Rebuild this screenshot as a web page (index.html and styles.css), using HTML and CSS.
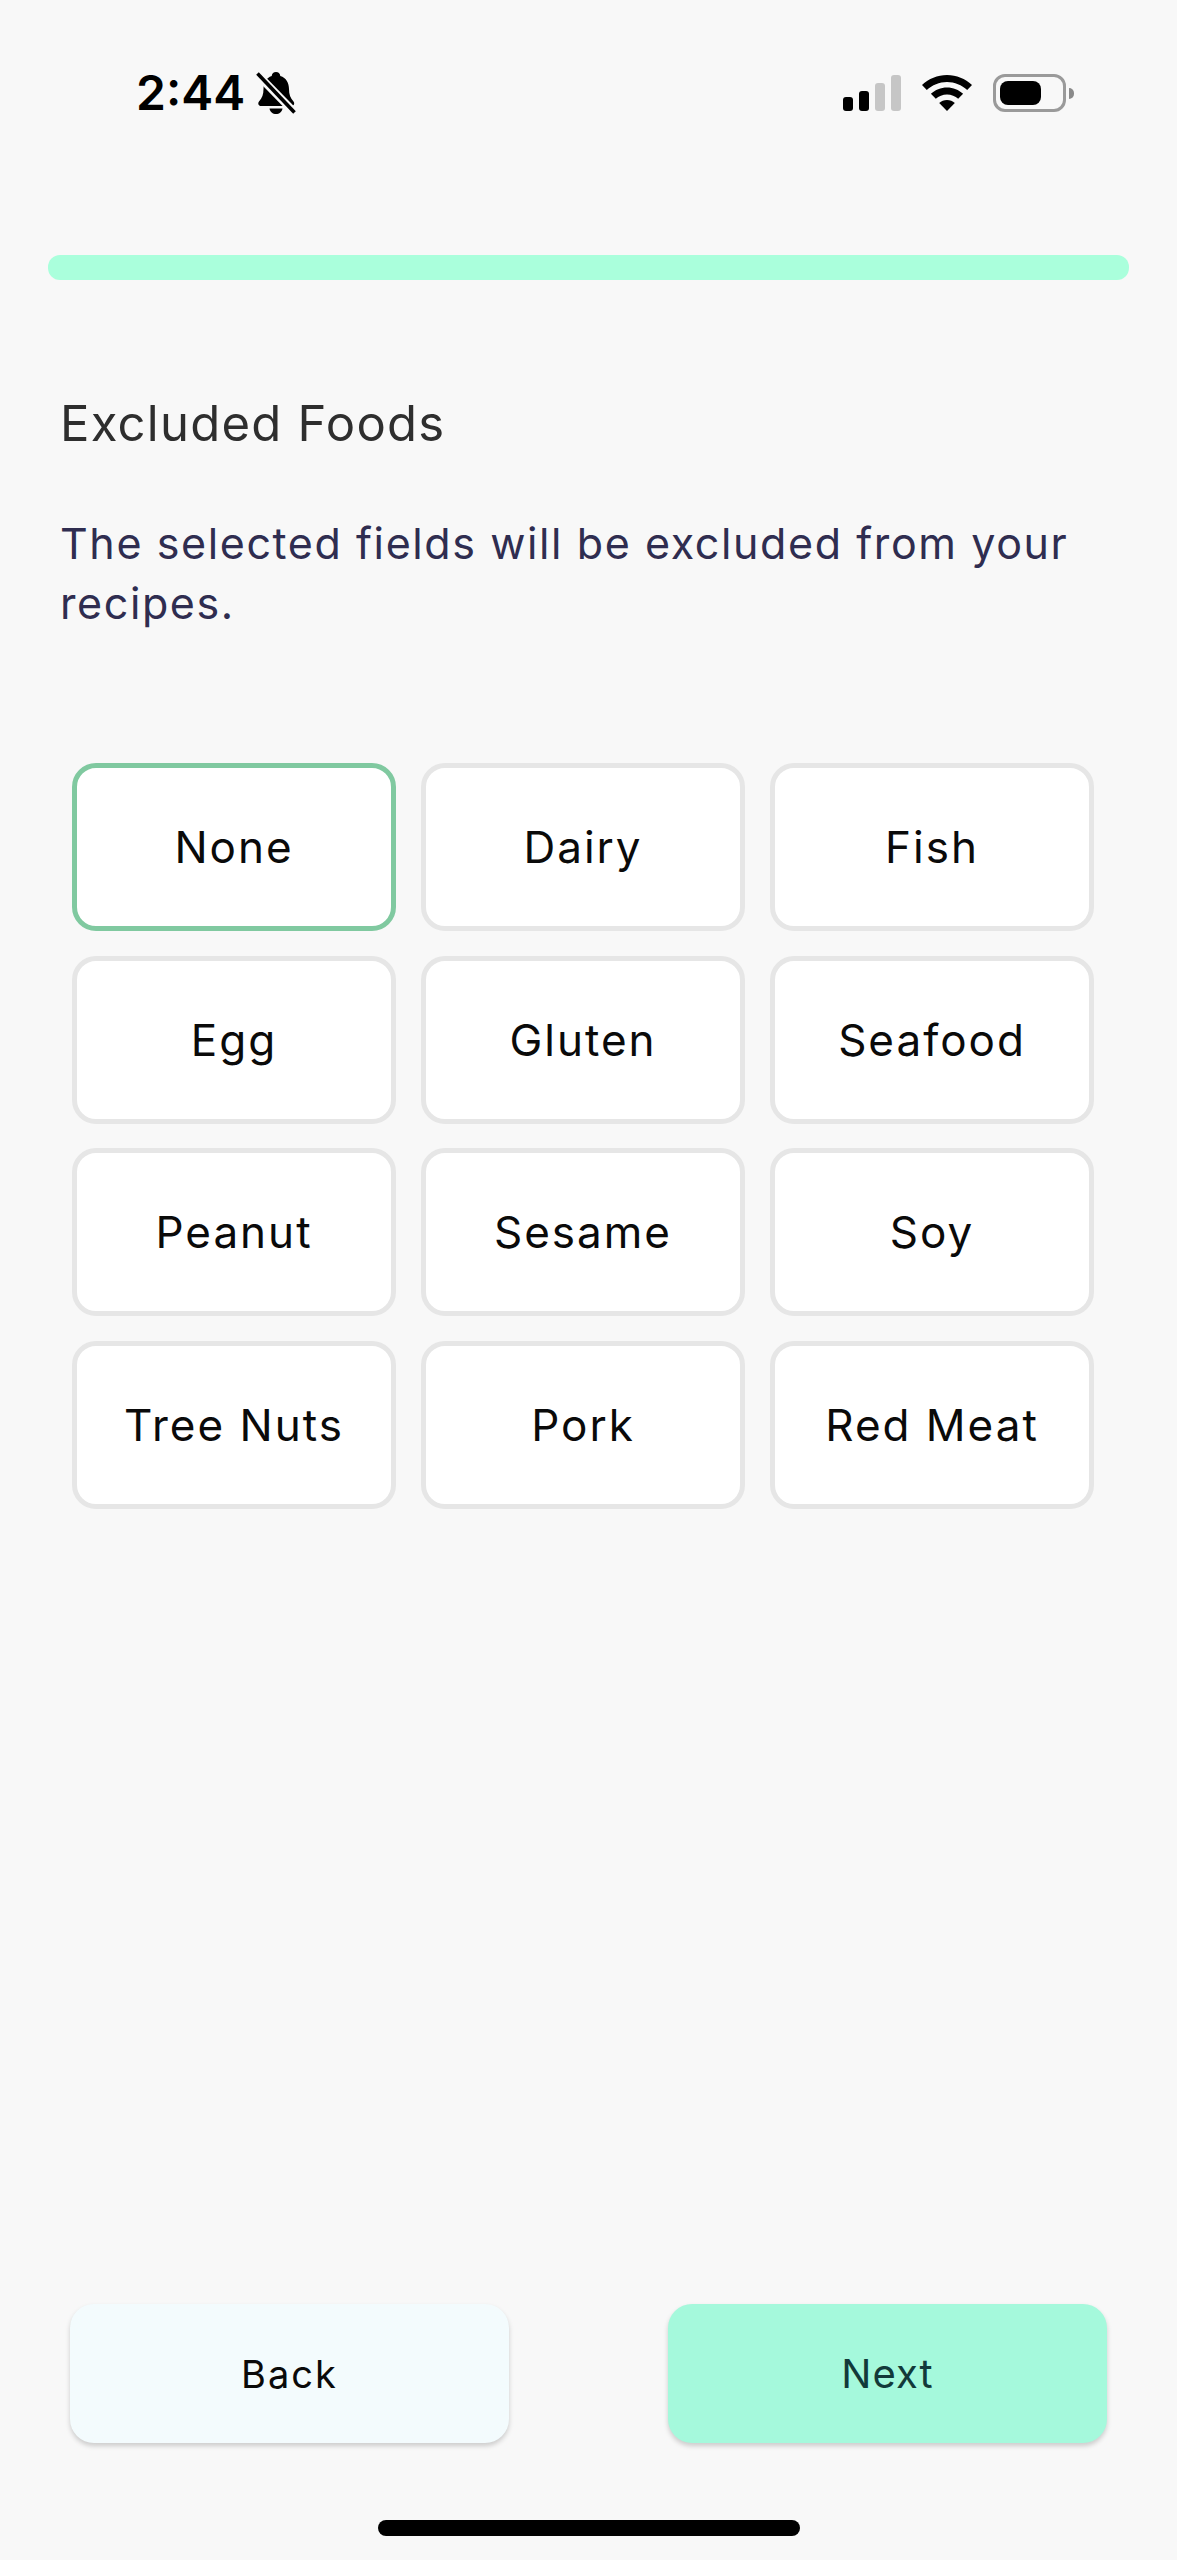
FILE: index.html
```html
<!DOCTYPE html>
<html lang="en">
<head>
    <meta charset="UTF-8">
    <meta name="viewport" content="width=device-width, initial-scale=1.0">
    <title>Excluded Foods</title>
    <link rel="stylesheet" href="styles.css">
</head>
<body>
    <div class="screen">
        <!-- Status bar -->
        <div class="status-bar">
            <div class="status-left">
                <span class="status-time">2:44</span>
                <svg class="icon-bell" viewBox="0 0 40 44" width="40" height="44">
                    <path d="M20 1c2.500 0 4 1.700 4.300 3.900 6 1.800 8.700 7 8.700 13.100 0 5.500 1.300 9 4.500 12.500 1.500 1.700.5 4.500-2 4.500H5c-2.500 0-3.500-2.800-2-4.500C6.200 27 7.500 23.500 7.500 18c0-6.100 2.700-11.300 8.200-13.100C16 2.700 17.500 1 20 1z" fill="#000"/>
                    <path d="M13.500 37.500h13c-.5 3.500-3.200 5.500-6.500 5.500s-6-2-6.500-5.500z" fill="#000"/>
                    <path d="M2.500 4.500 L38 41" stroke="#f8f8f8" stroke-width="8" fill="none"/>
                    <path d="M1.500 2.500 L38.500 41.500" stroke="#000" stroke-width="3.600" fill="none"/>
                </svg>
            </div>
            <div class="status-right">
                <div class="signal">
                    <span class="signal-bar bar-1"></span>
                    <span class="signal-bar bar-2"></span>
                    <span class="signal-bar bar-3 is-off"></span>
                    <span class="signal-bar bar-4 is-off"></span>
                </div>
                <svg class="icon-wifi" viewBox="0 0 50 36" width="50" height="36">
                    <path d="M25 0c9.500 0 18.300 3.700 25 10l-4.800 5C39.800 10 32.700 7 25 7S10.200 10 4.800 15L0 10C6.700 3.700 15.500 0 25 0z" fill="#000"/>
                    <path d="M25 12.500c6.200 0 11.800 2.400 16.100 6.300l-4.900 5C33.200 21.100 29.300 19.500 25 19.500s-8.200 1.600-11.200 4.300l-4.900-5C13.200 14.900 18.800 12.500 25 12.500z" fill="#000"/>
                    <path d="M25 25c3 0 5.700 1.100 7.800 3L25 36l-7.800-8c2.100-1.900 4.800-3 7.800-3z" fill="#000"/>
                </svg>
                <div class="battery">
                    <div class="battery-body"><span class="battery-level"></span></div>
                    <span class="battery-nub"></span>
                </div>
            </div>
        </div>

        <!-- Progress -->
        <div class="progress"></div>

        <!-- Heading -->
        <h1 class="title">Excluded Foods</h1>
        <p class="subtitle">The selected fields will be excluded from your recipes.</p>

        <!-- Food options -->
        <div class="food-grid">
            <div class="food-card is-selected">None</div>
            <div class="food-card">Dairy</div>
            <div class="food-card">Fish</div>
            <div class="food-card">Egg</div>
            <div class="food-card">Gluten</div>
            <div class="food-card">Seafood</div>
            <div class="food-card">Peanut</div>
            <div class="food-card">Sesame</div>
            <div class="food-card">Soy</div>
            <div class="food-card">Tree Nuts</div>
            <div class="food-card">Pork</div>
            <div class="food-card">Red Meat</div>
        </div>

        <!-- Bottom actions -->
        <div class="actions">
            <button class="btn btn-back">Back</button>
            <button class="btn btn-next">Next</button>
        </div>
        <div class="home-bar"></div>
    </div>
</body>
</html>
```

FILE: styles.css
```css
/* Base */
* {
    margin: 0;
    padding: 0;
    box-sizing: border-box;
}

body {
    font-family: "Inter", "Open Sans", sans-serif;
    background-color: #f8f8f8;
}

.screen {
    width: 1177px;
    height: 2560px;
    display: flex;
    flex-direction: column;
    overflow: hidden;
}

/* Status bar */
.status-bar {
    height: 72px;
    margin-top: 57px;
    padding: 0 103px 0 136px;
    display: flex;
    justify-content: space-between;
    align-items: center;
}

.status-left {
    display: flex;
    align-items: center;
    gap: 11px;
}

.status-time {
    font-family: "Inter", sans-serif;
    font-size: 48px;
    font-weight: 600;
    line-height: 1;
    color: #000;
}

.status-right {
    display: flex;
    align-items: center;
    gap: 21px;
}

.signal {
    display: flex;
    align-items: flex-end;
    gap: 6px;
    height: 36px;
}

.signal-bar {
    width: 10px;
    border-radius: 3px;
    background-color: #000;
}

.signal-bar.is-off {
    background-color: #c6c6c6;
}

.bar-1 { height: 14px; }
.bar-2 { height: 20px; }
.bar-3 { height: 28px; }
.bar-4 { height: 36px; }

.battery {
    display: flex;
    align-items: center;
    gap: 3px;
}

.battery-body {
    width: 73px;
    height: 38px;
    padding: 4px;
    border: 3px solid #9a9a9a;
    border-radius: 12px;
}

.battery-level {
    display: block;
    width: 41px;
    height: 100%;
    border-radius: 8px;
    background-color: #000;
}

.battery-nub {
    width: 5px;
    height: 11px;
    border-radius: 0 5px 5px 0;
    background-color: #8a8a8a;
}

/* Progress */
.progress {
    height: 25px;
    margin: 126px 48px 0;
    border-radius: 12px;
    background-color: #aaffdc;
}

/* Heading */
.title {
    margin: 116px 0 0 60px;
    font-size: 49px;
    font-weight: 400;
    line-height: 56px;
    letter-spacing: 1.25px;
    color: #2e2e2e;
}

.subtitle {
    margin: 61px 60px 0;
    font-size: 43px;
    font-weight: 400;
    line-height: 60px;
    letter-spacing: 1.6px;
    color: #2f2d50;
}

/* Food options */
.food-grid {
    margin: 130px 0 0 72px;
    width: 1022px;
    display: grid;
    grid-template-columns: repeat(3, 1fr);
    grid-auto-rows: 168px;
    gap: 24.500px 25px;
}

.food-card {
    display: flex;
    align-items: center;
    justify-content: center;
    border: 5px solid #e6e6e6;
    border-radius: 24px;
    background-color: #fff;
    font-size: 44px;
    letter-spacing: 2px;
    color: #0a0a0a;
}

.food-card.is-selected {
    border-color: #80c9a0;
}

/* Bottom actions */
.actions {
    margin-top: auto;
    padding: 0 70px;
    display: flex;
    justify-content: space-between;
}

.btn {
    width: 439px;
    height: 139px;
    border: none;
    border-radius: 24px;
    font-family: inherit;
    box-shadow: 0 3px 5px rgba(0, 0, 0, 0.18);
}

.btn-back {
    background-color: #f3fbfd;
    font-size: 38px;
    letter-spacing: 2px;
    color: #0a0a0a;
}

.btn-next {
    background-color: #a5f9dc;
    font-size: 40px;
    letter-spacing: 1px;
    color: #123a3a;
}

.home-bar {
    width: 422px;
    height: 16px;
    margin: 77px auto 24px;
    border-radius: 8px;
    background-color: #000;
}
```
